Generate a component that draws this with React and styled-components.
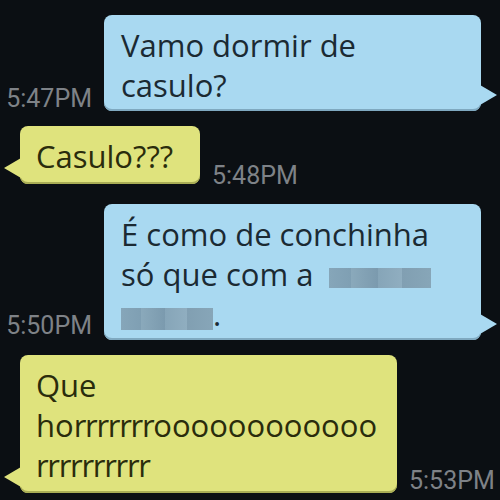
import React from "react";
import styled, { createGlobalStyle, css } from "styled-components";

const GlobalStyle = createGlobalStyle`
  html, body {
    margin: 0;
    padding: 0;
    background: #0b0f13;
  }
  #root {
    width: 500px;
    height: 500px;
    overflow: hidden;
  }
`;

const Screen = styled.div`
  width: 500px;
  height: 500px;
  box-sizing: border-box;
  padding-top: 15px;
  display: flex;
  flex-direction: column;
  gap: 15px;
  background: #0b0f13;
`;

const Row = styled.div`
  display: flex;
  align-items: flex-end;
  gap: 12px;
  margin-top: ${({ $extra }) => $extra || 0}px;
  ${({ $side }) =>
    $side === "right"
      ? css`
          justify-content: flex-end;
          padding-right: 19px;
        `
      : css`
          justify-content: flex-start;
          padding-left: 20px;
        `}
`;

const tones = {
  blue: { bg: "#a9d9f1", edge: "#7fa9c0", ink: "#1b2a33" },
  yellow: { bg: "#dfe37d", edge: "#a9ad55", ink: "#2a2c0c" },
};

const Bubble = styled.div`
  position: relative;
  box-sizing: border-box;
  width: ${({ $width }) => ($width ? `${$width}px` : "auto")};
  padding: ${({ $tone }) =>
    $tone === "blue" ? "10px 16px 6px 17px" : "10px 17px 8px 16px"};
  border-radius: 8px;
  background: ${({ $tone }) => tones[$tone].bg};
  box-shadow: inset 0 -2px 0 ${({ $tone }) => tones[$tone].edge};
  color: ${({ $tone }) => tones[$tone].ink};
  font-family: "Open Sans", "Liberation Sans", sans-serif;
  font-size: 31px;
  line-height: 40px;
  white-space: nowrap;

  &::after {
    content: "";
    position: absolute;
    bottom: 6px;
    border-top: 10px solid transparent;
    border-bottom: 10px solid transparent;
    ${({ $tone }) =>
      $tone === "blue"
        ? css`
            right: -16px;
            border-left: 17px solid ${tones.blue.bg};
          `
        : css`
            left: -16px;
            border-right: 17px solid ${tones.yellow.bg};
          `}
  }
`;

/* the r's in the original font are narrower than in Open Sans */
const Narrow = styled.span`
  letter-spacing: -1.3px;
`;

const Time = styled.span`
  flex: none;
  font-family: Roboto, "Liberation Sans", sans-serif;
  font-size: 25px;
  line-height: 24px;
  color: #7e8287;
  margin-bottom: ${({ $drop }) => -($drop || 0)}px;
`;

const Redacted = styled.span`
  display: inline-block;
  width: ${({ $w }) => $w}px;
  height: ${({ $h }) => $h || 20}px;
  margin-left: ${({ $shift }) => $shift || 0}px;
  vertical-align: ${({ $low }) => -($low || 2)}px;
  background: linear-gradient(
    90deg,
    #86a6b9 0%,
    #7f9fb3 22%,
    #8aa9bb 22%,
    #7b9aae 48%,
    #86a5b8 48%,
    #90aec0 72%,
    #819fb2 72%,
    #87a6b8 100%
  );
`;

export default function App() {
  return (
    <>
      <GlobalStyle />
      <Screen>
        <Row $side="right">
          <Time>5:47PM</Time>
          <Bubble $tone="blue" $width={377}>
            Vamo dormir de
            <br />
            casulo?
          </Bubble>
        </Row>

        <Row $side="left">
          <Bubble $tone="yellow" $width={180}>
            Casulo???
          </Bubble>
          <Time $drop={4}>5:48PM</Time>
        </Row>

        <Row $side="right" $extra={5}>
          <Time $drop={-2}>5:50PM</Time>
          <Bubble $tone="blue" $width={377}>
            É como de conchinha
            <br />
            só que com a <Redacted $w={102} $shift={8} />
            <br />
            <Redacted $w={92} $h={22} $low={4} />.
          </Bubble>
        </Row>

        <Row $side="left">
          <Bubble $tone="yellow" $width={377}>
            Que
            <br />
            ho<Narrow>rrrrrrr</Narrow>oooooooooooo
            <br />
            <Narrow>rrrrrrrrrr</Narrow>
          </Bubble>
          <Time>5:53PM</Time>
        </Row>
      </Screen>
    </>
  );
}
